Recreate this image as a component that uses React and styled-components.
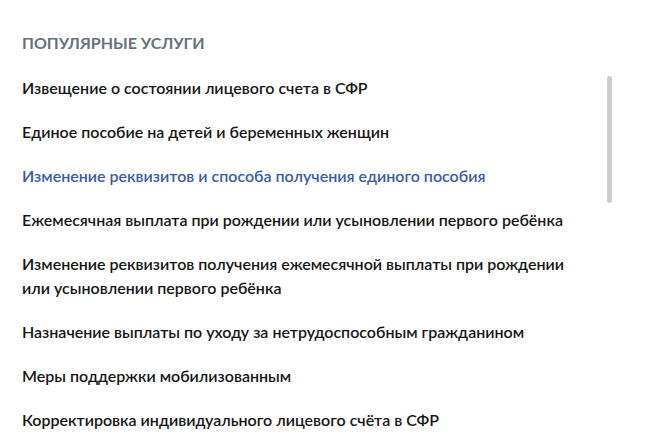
import styled, { createGlobalStyle } from 'styled-components';

const Global = createGlobalStyle`
  html, body { margin: 0; padding: 0; background: #fff; }
  body { font-family: Lato, "Noto Sans", sans-serif; overflow: hidden; }
`;

const services = [
  { title: 'Извещение о состоянии лицевого счета в СФР' },
  { title: 'Единое пособие на детей и беременных женщин' },
  { title: 'Изменение реквизитов и способа получения единого пособия', active: true },
  { title: 'Ежемесячная выплата при рождении или усыновлении первого ребёнка' },
  { title: 'Изменение реквизитов получения ежемесячной выплаты при рождении или усыновлении первого ребёнка' },
  { title: 'Назначение выплаты по уходу за нетрудоспособным гражданином' },
  { title: 'Меры поддержки мобилизованным' },
  { title: 'Корректировка индивидуального лицевого счёта в СФР' },
];

function App() {
  return (
    <>
      <Global />
      <Panel>
        <Heading>Популярные услуги</Heading>
        <ListWrap>
          <List>
            {services.map(item => (
              <Item key={item.title} $active={item.active}>{item.title}</Item>
            ))}
          </List>
          <Thumb />
        </ListWrap>
      </Panel>
    </>
  );
}

const Panel = styled.div`
  width: 646px;
  height: 445px;
  box-sizing: border-box;
  padding: 34px 0 0 22px;
`;

const Heading = styled.h3`
  margin: 0 0 24px;
  font-size: 16px;
  font-weight: 700;
  line-height: 18px;
  text-transform: uppercase;
  color: #66727f;
`;

const ListWrap = styled.div`
  position: relative;
  width: 590px;
`;

const List = styled.ul`
  list-style: none;
  margin: 0;
  padding: 0;
  width: 555px;
  display: flex;
  flex-direction: column;
  gap: 20px;
`;

const Item = styled.li`
  font-size: 16px;
  font-weight: 600;
  line-height: 24px;
  color: ${p => (p.$active ? '#3b59b0' : '#161616')};
  cursor: pointer;
`;

const Thumb = styled.div`
  position: absolute;
  top: 0;
  right: 0;
  width: 5px;
  height: 127px;
  border-radius: 3px;
  background: #cccccc;
`;

export default App;
